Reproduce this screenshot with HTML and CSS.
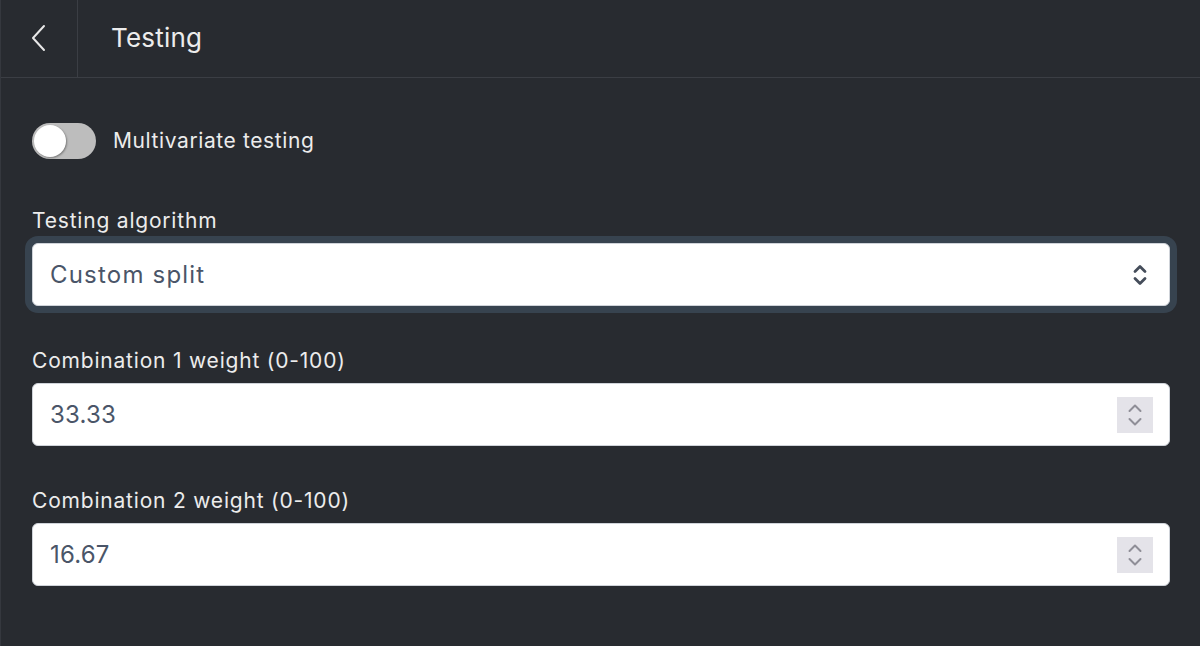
FILE: index.html
```html
<!DOCTYPE html>
<html lang="en">
<head>
  <meta charset="UTF-8" />
  <meta name="viewport" content="width=device-width, initial-scale=1.0" />
  <title>Testing</title>
  <link rel="stylesheet" href="styles.css">
</head>
<body>
<div class="panel">
  <div class="topbar">
    <button class="topbar__back" aria-label="Back">
      <svg width="16" height="28" viewBox="0 0 16 28" fill="none">
        <path d="M14 2 L3 14 L14 26" stroke="#e8e8e8" stroke-width="2" stroke-linecap="round" stroke-linejoin="round"/>
      </svg>
    </button>
    <div class="topbar__title">Testing</div>
  </div>
  <div class="content">
    <label class="switch">
      <span class="switch__track"><span class="switch__knob"></span></span>
      <span class="switch__label">Multivariate testing</span>
    </label>

    <div class="field">
      <div class="field__label">Testing algorithm</div>
      <div class="select is-focused">
        <span class="select__value">Custom split</span>
        <svg class="select__arrows" width="16" height="24" viewBox="0 0 16 24" fill="none">
          <path d="M3 8.5 L8 3.5 L13 8.5" stroke="#454d5a" stroke-width="2.8" stroke-linecap="round" stroke-linejoin="round"/>
          <path d="M3 15.5 L8 20.5 L13 15.5" stroke="#454d5a" stroke-width="2.8" stroke-linecap="round" stroke-linejoin="round"/>
        </svg>
      </div>
    </div>

    <div class="field">
      <div class="field__label">Combination 1 weight (0-100)</div>
      <div class="number">
        <span class="number__value">33.33</span>
        <span class="number__spin">
          <svg width="16" height="26" viewBox="0 0 16 26" fill="none">
            <path d="M2.5 9 L8 3.5 L13.5 9" stroke="#8f8e97" stroke-width="2" stroke-linecap="round" stroke-linejoin="round"/>
            <path d="M2.5 17 L8 22.5 L13.5 17" stroke="#8f8e97" stroke-width="2" stroke-linecap="round" stroke-linejoin="round"/>
          </svg>
        </span>
      </div>
    </div>

    <div class="field">
      <div class="field__label">Combination 2 weight (0-100)</div>
      <div class="number">
        <span class="number__value">16.67</span>
        <span class="number__spin">
          <svg width="16" height="26" viewBox="0 0 16 26" fill="none">
            <path d="M2.5 9 L8 3.5 L13.5 9" stroke="#8f8e97" stroke-width="2" stroke-linecap="round" stroke-linejoin="round"/>
            <path d="M2.5 17 L8 22.5 L13.5 17" stroke="#8f8e97" stroke-width="2" stroke-linecap="round" stroke-linejoin="round"/>
          </svg>
        </span>
      </div>
    </div>
  </div>
</div>
</body>
</html>
```

FILE: styles.css
```css
* {
  box-sizing: border-box;
}
html, body {
  margin: 0;
  height: 100%;
}
body {
  font-family: Inter, "Noto Sans", sans-serif;
  background: #282b30;
  color: #ececec;
}
.panel {
  min-height: 100%;
  border-left: 1px solid #35383e;
}
.topbar {
  display: flex;
  height: 78px;
  border-bottom: 1px solid #3b3e44;
}
.topbar__back {
  width: 78px;
  background: none;
  border: none;
  border-right: 1px solid #3b3e44;
  padding: 0;
  display: flex;
  align-items: center;
  justify-content: center;
  margin-left: -1px;
}
.topbar__back svg {
  margin-right: 2px;
  margin-top: -2px;
}
.topbar__title {
  display: flex;
  align-items: center;
  padding-left: 33px;
  padding-bottom: 2px;
  font-size: 26px;
  color: #ececec;
  letter-spacing: 0.2px;
}
.content {
  padding: 45px 30px 0 31px;
}
.switch {
  display: flex;
  align-items: center;
  gap: 17px;
  margin-bottom: 50px;
}
.switch__track {
  width: 64px;
  height: 36px;
  border-radius: 18px;
  background: #bdbdbd;
  padding: 2px;
  display: flex;
}
.switch__knob {
  width: 32px;
  height: 32px;
  border-radius: 50%;
  background: #fff;
  box-shadow: 1px 1px 2px rgba(0, 0, 0, 0.35);
}
.switch__label {
  font-size: 21px;
  letter-spacing: 0.6px;
  margin-top: -2px;
}
.field {
  margin-bottom: 43px;
}
.field__label {
  font-size: 21px;
  line-height: 24px;
  margin-bottom: 10px;
  letter-spacing: 0.8px;
}
.select,
.number {
  height: 63px;
  background: #fff;
  border: 1px solid #cfd3d9;
  border-radius: 6px;
  display: flex;
  align-items: center;
  padding: 0 16px 0 17px;
  color: #4a5568;
  font-size: 24px;
}
.select.is-focused {
  box-shadow: 0 0 0 7px #37434f;
}
.select__value {
  flex: 1;
  letter-spacing: 1.2px;
}
.number__value {
  flex: 1;
  letter-spacing: 0.2px;
}
.select__arrows {
  margin-right: 5px;
}
.number__spin {
  width: 36px;
  height: 36px;
  background: #e4e3e9;
  display: flex;
  align-items: center;
  justify-content: center;
}
```
